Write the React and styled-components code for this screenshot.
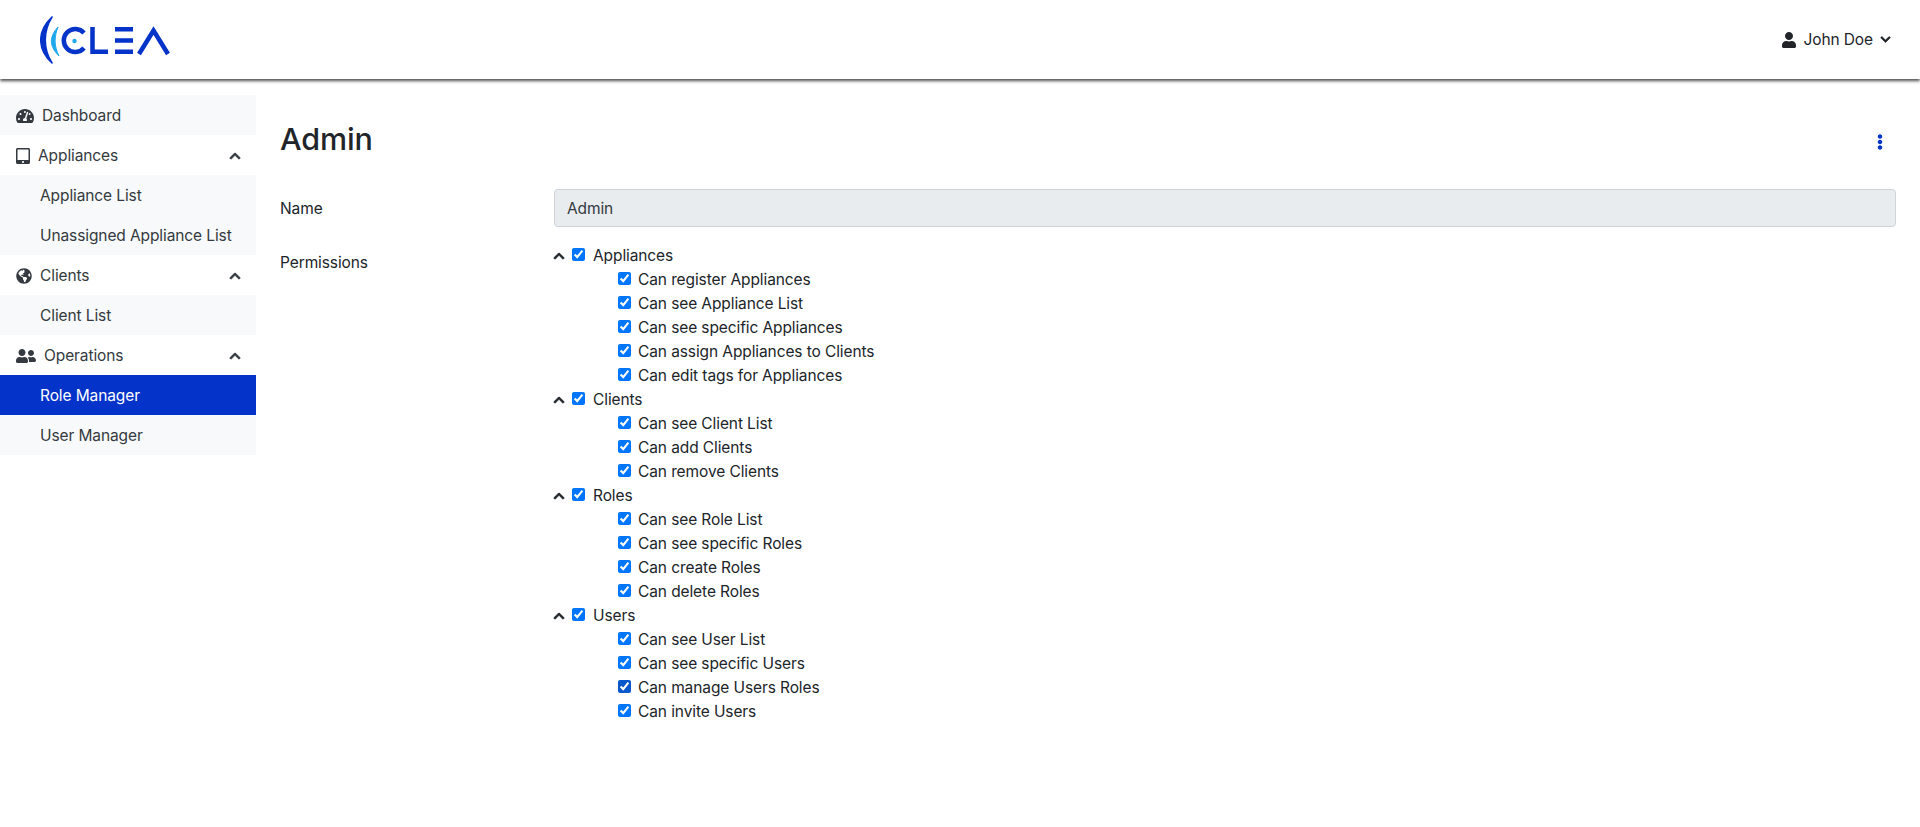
import React from "react";
import styled, { createGlobalStyle } from "styled-components";
import {
  FaTachometerAlt,
  FaTabletAlt,
  FaGlobeAmericas,
  FaUserFriends,
  FaChevronUp,
  FaChevronDown,
  FaUser,
  FaEllipsisV,
} from "react-icons/fa";

const GlobalStyle = createGlobalStyle`
  * { box-sizing: border-box; }
  body {
    margin: 0;
    background: #fff;
    color: #212529;
    font-family: Inter, "Liberation Sans", sans-serif;
    font-size: 15.5px;
    letter-spacing: -0.1px;
    line-height: 24px;
  }
`;

const Header = styled.header`
  height: 79px;
  display: flex;
  align-items: center;
  justify-content: space-between;
  padding: 0 29px 0 40px;
  background: #fff;
  box-shadow: 0 2px 3px rgba(0, 0, 0, 0.7);
`;

const UserMenu = styled.div`
  display: flex;
  align-items: center;
  gap: 7px;
`;

const UserIcon = styled(FaUser)`
  width: 14px;
  height: 16px;
`;

const UserCaret = styled(FaChevronDown)`
  font-size: 11px;
  stroke-width: 30px;
`;

const Body = styled.div`
  display: flex;
  padding-top: 16px;
`;

const Sidebar = styled.nav`
  width: 256px;
  flex: none;
  color: #343a40;
`;

const NavRow = styled.div`
  height: 40px;
  display: flex;
  align-items: center;
  padding: 1px 16px 0;
  gap: 8px;
  background: ${(p) => (p.$shaded ? "#f8f9fa" : "#fff")};
`;

const NavChild = styled.div`
  height: 40px;
  display: flex;
  align-items: center;
  padding: 1px 0 0 40px;
  background: ${(p) => (p.$active ? "#0433c9" : "#f8f9fa")};
  color: ${(p) => (p.$active ? "#fff" : "#343a40")};
`;

const DashboardIcon = styled(FaTachometerAlt)`
  width: 18px;
  height: 16px;
`;

const TabletIcon = styled(FaTabletAlt)`
  width: 14px;
  height: 16px;
`;

const GlobeIcon = styled(FaGlobeAmericas)`
  width: 16px;
  height: 16px;
`;

const PeopleIcon = styled(FaUserFriends)`
  width: 20px;
  height: 16px;
`;

const Arrow = styled(FaChevronUp)`
  margin: 0 -1px 0 auto;
  font-size: 12px;
  stroke-width: 30px;
`;

const Main = styled.main`
  flex: 1;
  padding: 16px 24px 0;
`;

const TitleRow = styled.div`
  display: flex;
  align-items: center;
  justify-content: space-between;
  height: 56px;
  margin-bottom: 22px;
`;

const Title = styled.h1`
  margin: 0;
  font-size: 30.5px;
  line-height: 40px;
  font-weight: 500;
`;

const MoreIcon = styled(FaEllipsisV)`
  color: #0433c9;
  font-size: 16px;
  margin: 6px 8px 0 0;
`;

const FormRow = styled.div`
  display: grid;
  grid-template-columns: 274px 1fr;
  margin-bottom: ${(p) => p.$mb || 0}px;
`;

const Label = styled.label`
  padding-top: ${(p) => p.$pt}px;
`;

const ReadOnlyInput = styled.input`
  width: 100%;
  height: 38px;
  padding: 6px 12px;
  font: inherit;
  letter-spacing: inherit;
  color: #343a40;
  background: #e9ecef;
  border: 1px solid #ced4da;
  border-radius: 4px;
`;

const GroupRow = styled.div`
  height: 24px;
  display: flex;
  align-items: center;
`;

const ItemRow = styled.div`
  height: 24px;
  display: flex;
  align-items: center;
  padding-left: 64px;
`;

const Toggle = styled(FaChevronUp)`
  font-size: 12px;
  width: 12px;
  margin: 0 7px 0 -1px;
  stroke-width: 30px;
`;

const Check = styled.input.attrs({ type: "checkbox" })`
  width: 13px;
  height: 13px;
  margin: 0 ${(p) => p.$gap}px 3px 0;
  accent-color: ${(p) => p.$accent || "auto"};
`;

const Logo = () => (
  <svg width="132" height="50" viewBox="40 14 132 50" aria-label="CLEA logo">
    <path d="M52 16 C37 30 37 48 52 62 C43 48 43 30 52 16Z" fill="#0433c9" stroke="#0433c9" strokeWidth="1.6" strokeLinejoin="round" />
    <path d="M58 26 C49 36 49 45 59 55 C54 45 54 36 58 26Z" fill="#1fa9ec" stroke="#1fa9ec" strokeWidth="1" />
    <path d="M84 32 A11.5 11.5 0 1 0 84 47" fill="none" stroke="#0433c9" strokeWidth="4.5" />
    <circle cx="74.5" cy="40" r="2.2" fill="#1fa9ec" />
    <path d="M92.5 26V50.7H108" fill="none" stroke="#0433c9" strokeWidth="4.5" />
    <path d="M115 28.3H133M115 39.5H133M115 50.7H133" fill="none" stroke="#0433c9" strokeWidth="4.5" />
    <path d="M139 53L153.5 29.5L168 53" fill="none" stroke="#0433c9" strokeWidth="4.5" />
  </svg>
);

const permissions = [
  ["Appliances", ["Can register Appliances", "Can see Appliance List", "Can see specific Appliances", "Can assign Appliances to Clients", "Can edit tags for Appliances"]],
  ["Clients", ["Can see Client List", "Can add Clients", "Can remove Clients"]],
  ["Roles", ["Can see Role List", "Can see specific Roles", "Can create Roles", "Can delete Roles"]],
  ["Users", ["Can see User List", "Can see specific Users", "Can manage Users Roles", "Can invite Users"]],
];

export default function App() {
  return (
    <>
      <GlobalStyle />
      <Header>
        <Logo />
        <UserMenu>
          <UserIcon />
          <span>John Doe</span>
          <UserCaret />
        </UserMenu>
      </Header>
      <Body>
        <Sidebar>
          <NavRow $shaded>
            <DashboardIcon />
            Dashboard
          </NavRow>
          <NavRow>
            <TabletIcon />
            Appliances
            <Arrow />
          </NavRow>
          <NavChild>Appliance List</NavChild>
          <NavChild>Unassigned Appliance List</NavChild>
          <NavRow>
            <GlobeIcon />
            Clients
            <Arrow />
          </NavRow>
          <NavChild>Client List</NavChild>
          <NavRow>
            <PeopleIcon />
            Operations
            <Arrow />
          </NavRow>
          <NavChild $active>Role Manager</NavChild>
          <NavChild>User Manager</NavChild>
        </Sidebar>
        <Main>
          <TitleRow>
            <Title>Admin</Title>
            <MoreIcon />
          </TitleRow>
          <FormRow $mb={17}>
            <Label $pt={8}>Name</Label>
            <ReadOnlyInput readOnly value="Admin" />
          </FormRow>
          <FormRow>
            <Label $pt={7}>Permissions</Label>
            <div>
              {permissions.map(([group, items]) => (
                <div key={group}>
                  <GroupRow>
                    <Toggle />
                    <Check defaultChecked $gap={8} />
                    {group}
                  </GroupRow>
                  {items.map((item) => (
                    <ItemRow key={item}>
                      <Check defaultChecked $gap={7} $accent={item === "Can manage Users Roles" ? "#0a58ca" : undefined} />
                      {item}
                    </ItemRow>
                  ))}
                </div>
              ))}
            </div>
          </FormRow>
        </Main>
      </Body>
    </>
  );
}
